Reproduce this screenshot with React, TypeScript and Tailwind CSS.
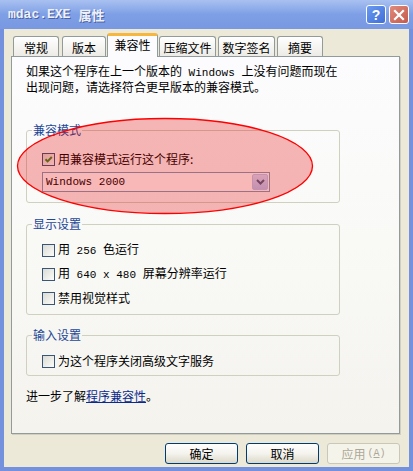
import React from "react";

const mono = "font-['Liberation_Mono',monospace] text-[11px]";

function Check({ checked }: { checked?: boolean }) {
  return (
    <span className="w-[13px] h-[13px] shrink-0 border border-[#3b5577] bg-gradient-to-br from-[#dcdcd5] to-[#fbfbf9] flex items-center justify-center">
      {checked && (
        <svg width="9" height="9" viewBox="0 0 9 9">
          <path d="M1.5 4.2 L3.6 6.4 L7.8 2" stroke="#3a8a22" strokeWidth="2" fill="none" />
        </svg>
      )}
    </span>
  );
}

function Row({ children, checked }: { children: React.ReactNode; checked?: boolean }) {
  return (
    <div className="h-[14px] flex items-center gap-[3px] leading-[14px]">
      <Check checked={checked} />
      <span className="whitespace-pre">{children}</span>
    </div>
  );
}

function Group({ title, children, className }: { title: string; children: React.ReactNode; className?: string }) {
  return (
    <fieldset className={"w-[314px] border border-[#d0d0bf] rounded-[3px] " + (className ?? "")}>
      <legend className="ml-[5px] px-[1px] leading-[14px] text-[#1d4797]">{title}</legend>
      {children}
    </fieldset>
  );
}

function Tab({ label, w, ml, active }: { label: string; w: string; ml: string; active?: boolean }) {
  if (active) {
    return (
      <div
        className={`${w} ${ml} h-[24px] -mb-px relative z-10 bg-[#fcfcfe] border border-b-0 border-[#919b9c] border-t-[3px] border-t-[#f7b73f] rounded-t-[3px] flex items-start justify-center pt-[2px] leading-[14px]`}
      >
        {label}
      </div>
    );
  }
  return (
    <div
      className={`${w} ${ml} h-[20px] bg-gradient-to-b from-white to-[#ecebe6] border border-b-0 border-[#919b9c] rounded-t-[3px] flex items-center justify-center leading-[14px] pt-[2px]`}
    >
      {label}
    </div>
  );
}

function Btn({ children, disabled }: { children: React.ReactNode; disabled?: boolean }) {
  return (
    <button
      className={
        "w-[73px] h-[21px] rounded-[3px] flex items-center justify-center leading-[14px] " +
        (disabled
          ? "border border-[#c9c7ba] bg-[#f5f4ea] text-[#aca899]"
          : "border border-[#003c74] bg-gradient-to-b from-white via-[#f4f3ee] to-[#dcd9c8] text-black")
      }
    >
      {children}
    </button>
  );
}

export default function App() {
  return (
    <div className="relative w-[413px] h-[471px] bg-[#7391dc] flex flex-col font-['Noto_Sans_CJK_SC',sans-serif] text-[12px] text-black overflow-hidden">
      {/* title bar */}
      <div className="h-[29px] shrink-0 flex items-center pl-[8px] pr-[8px] bg-gradient-to-b from-[#a9c1f1] via-[#7e9fe5] to-[#7899e2]">
        <span className="font-bold text-[#eef1f8] [text-shadow:1px_1px_0_#4a62a8] flex items-center gap-[2px]">
          <span className="font-['Liberation_Mono',monospace] text-[13px]">mdac.EXE</span>
          <span className="text-[13px] ml-[6px]">属性</span>
        </span>
        <div className="ml-auto flex gap-[3px] -mr-[4px]">
          <div className="w-[20px] h-[19px] rounded-[3px] border border-white bg-gradient-to-br from-[#6b9af0] to-[#3f6ed8] flex items-center justify-center text-white font-bold text-[14px] leading-none font-['Liberation_Sans',sans-serif]">
            ?
          </div>
          <div className="w-[20px] h-[19px] rounded-[3px] border border-white bg-gradient-to-br from-[#e08a7c] to-[#c45a4c] flex items-center justify-center">
            <svg width="12" height="12" viewBox="0 0 12 12">
              <path d="M2 2 L10 10 M10 2 L2 10" stroke="white" strokeWidth="2.2" strokeLinecap="square" />
            </svg>
          </div>
        </div>
      </div>

      {/* body */}
      <div className="flex-1 mx-[4px] mb-[4px] bg-[#ece9d8] flex flex-col">
        {/* tabs */}
        <div className="h-[27px] shrink-0 flex items-end pl-[9px]">
          <Tab label="常规" w="w-[46px]" ml="ml-0" />
          <Tab label="版本" w="w-[44px]" ml="ml-[3px]" />
          <Tab label="兼容性" w="w-[51px]" ml="ml-[1px]" active />
          <Tab label="压缩文件" w="w-[57px]" ml="ml-[1px]" />
          <Tab label="数字签名" w="w-[57px]" ml="ml-[2px]" />
          <Tab label="摘要" w="w-[46px]" ml="ml-[2px]" />
        </div>

        {/* panel */}
        <div className="ml-[7px] w-[389px] h-[378px] shrink-0 border border-[#919b9c] shadow-[1px_1px_0_#d0cfc2] bg-gradient-to-b from-[#fcfcfe] via-[#f9f9f6] to-[#f4f3ee] pl-[14px] pt-[7px] flex flex-col">
          <p className="leading-[14px] whitespace-pre">
            如果这个程序在上一个版本的<span className={mono}>{" Windows "}</span>上没有问题而现在
            <br />
            出现问题，请选择符合更早版本的兼容模式。
          </p>

          <Group title="兼容模式" className="mt-[29px]">
            <div className="pl-[15px] pt-[15px] pb-[10px]">
              <Row checked>用兼容模式运行这个程序:</Row>
              <div className="mt-[6px] w-[228px] h-[20px] border border-[#7f9db9] bg-white flex items-center pl-[3px] pr-[1px]">
                <span className={mono}>Windows 2000</span>
                <div className="ml-auto w-[16px] h-[16px] rounded-[2px] border border-[#b9c9ef] bg-gradient-to-b from-[#d5e0fb] to-[#b6c8f6] flex items-center justify-center">
                  <svg width="9" height="6" viewBox="0 0 9 6">
                    <path d="M1 1 L4.5 4.5 L8 1" stroke="#4d6185" strokeWidth="2" fill="none" />
                  </svg>
                </div>
              </div>
            </div>
          </Group>

          <Group title="显示设置" className="mt-[14px]">
            <div className="pl-[15px] pt-[12px] pb-[9px] flex flex-col gap-[10px]">
              <Row>
                用<span className={mono}>{" 256 "}</span>色运行
              </Row>
              <Row>
                用<span className={mono}>{" 640 x 480 "}</span>屏幕分辨率运行
              </Row>
              <Row>禁用视觉样式</Row>
            </div>
          </Group>

          <Group title="输入设置" className="mt-[13px]">
            <div className="pl-[15px] pt-[12px] pb-[7px]">
              <Row>为这个程序关闭高级文字服务</Row>
            </div>
          </Group>

          <p className="mt-[13px] leading-[14px]">
            进一步了解<span className="text-[#0b2a8c] underline">程序兼容性</span>。
          </p>
        </div>

        {/* buttons */}
        <div className="flex justify-end gap-[8px] pt-[9px] pr-[9px]">
          <Btn>确定</Btn>
          <Btn>取消</Btn>
          <Btn disabled>
            应用<span className="font-['Liberation_Mono',monospace] text-[10px] ml-[2px]">
              (<span className="underline">A</span>)
            </span>
          </Btn>
        </div>
      </div>

      {/* red ellipse annotation */}
      <svg className="absolute left-[16px] top-[117px] pointer-events-none" width="298" height="98" viewBox="0 0 298 98">
        <ellipse cx="149" cy="49" rx="147.5" ry="47.5" fill="rgba(230,0,0,0.28)" stroke="#ff0000" strokeWidth="1.3" />
      </svg>
    </div>
  );
}
